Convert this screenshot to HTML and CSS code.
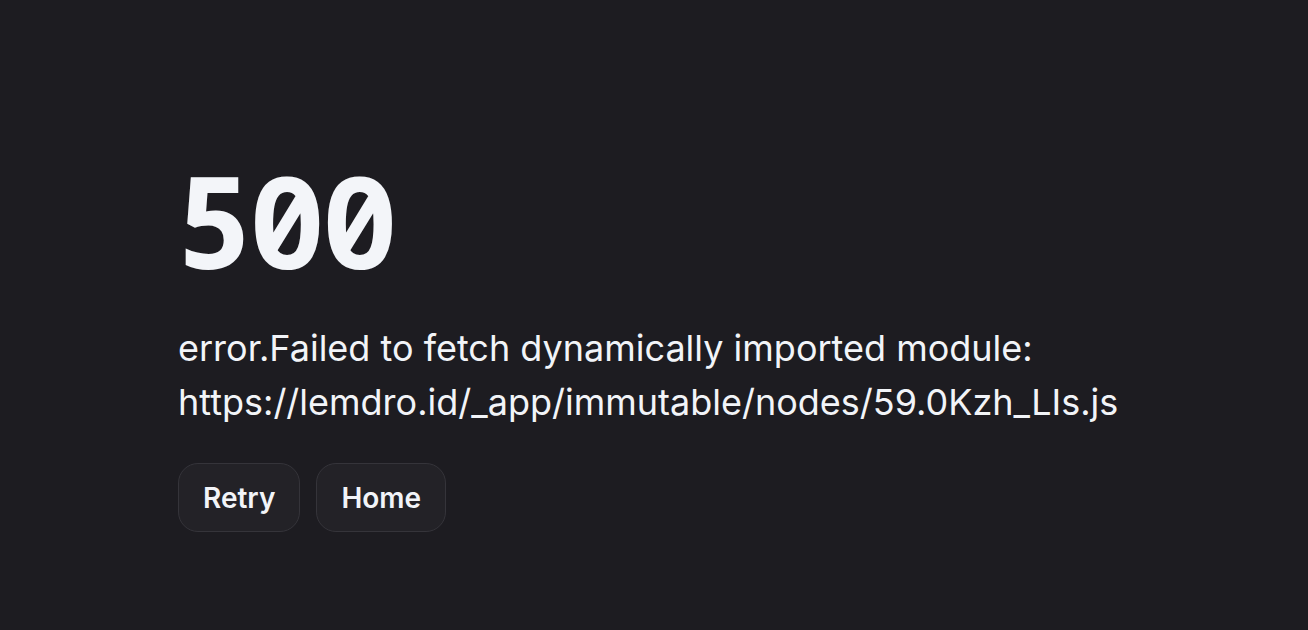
FILE: index.html
```html
<!DOCTYPE html>
<html lang="en">
<head>
<meta charset="utf-8">
<title>500</title>
<link rel="stylesheet" href="styles.css">
</head>
<body>
<main class="page">
  <div class="error">
    <h1 class="code">500</h1>
    <p class="message">error.Failed to fetch dynamically imported module: https://lemdro.id/_app/immutable/nodes/59.0Kzh_LIs.js</p>
    <div class="actions">
      <button class="btn" type="button">Retry</button>
      <button class="btn" type="button">Home</button>
    </div>
  </div>
</main>
</body>
</html>
```

FILE: styles.css
```css
html, body {
  margin: 0;
  padding: 0;
  background: #1d1c21;
  height: 100%;
}
.page {
  height: 630px;
  display: flex;
  align-items: flex-start;
  justify-content: center;
  font-family: Inter, "Noto Sans", sans-serif;
  color: #f2f4f8;
}
.error {
  width: 952px;
  padding-top: 156px;
}
.code {
  margin: 0 0 0 -2px;
  font-family: "Noto Sans Mono", "DejaVu Sans Mono", monospace;
  font-feature-settings: "zero" 1;
  font-variant-numeric: slashed-zero;
  font-weight: 700;
  font-size: 128px;
  letter-spacing: -4px;
  line-height: 1;
  color: #f3f5f9;
}
.message {
  margin: 37px 0 0;
  font-size: 36px;
  line-height: 54px;
  font-weight: 400;
  color: #f2f4f8;
}
.actions {
  display: flex;
  gap: 16px;
  margin-top: 34px;
}
.btn {
  font-family: Inter, "Noto Sans", sans-serif;
  font-size: 28px;
  font-weight: 600;
  color: #f2f4f8;
  background: #232227;
  border: 1.5px solid #35343a;
  border-radius: 20px;
  height: 69px;
  padding: 0 24px;
}
```
